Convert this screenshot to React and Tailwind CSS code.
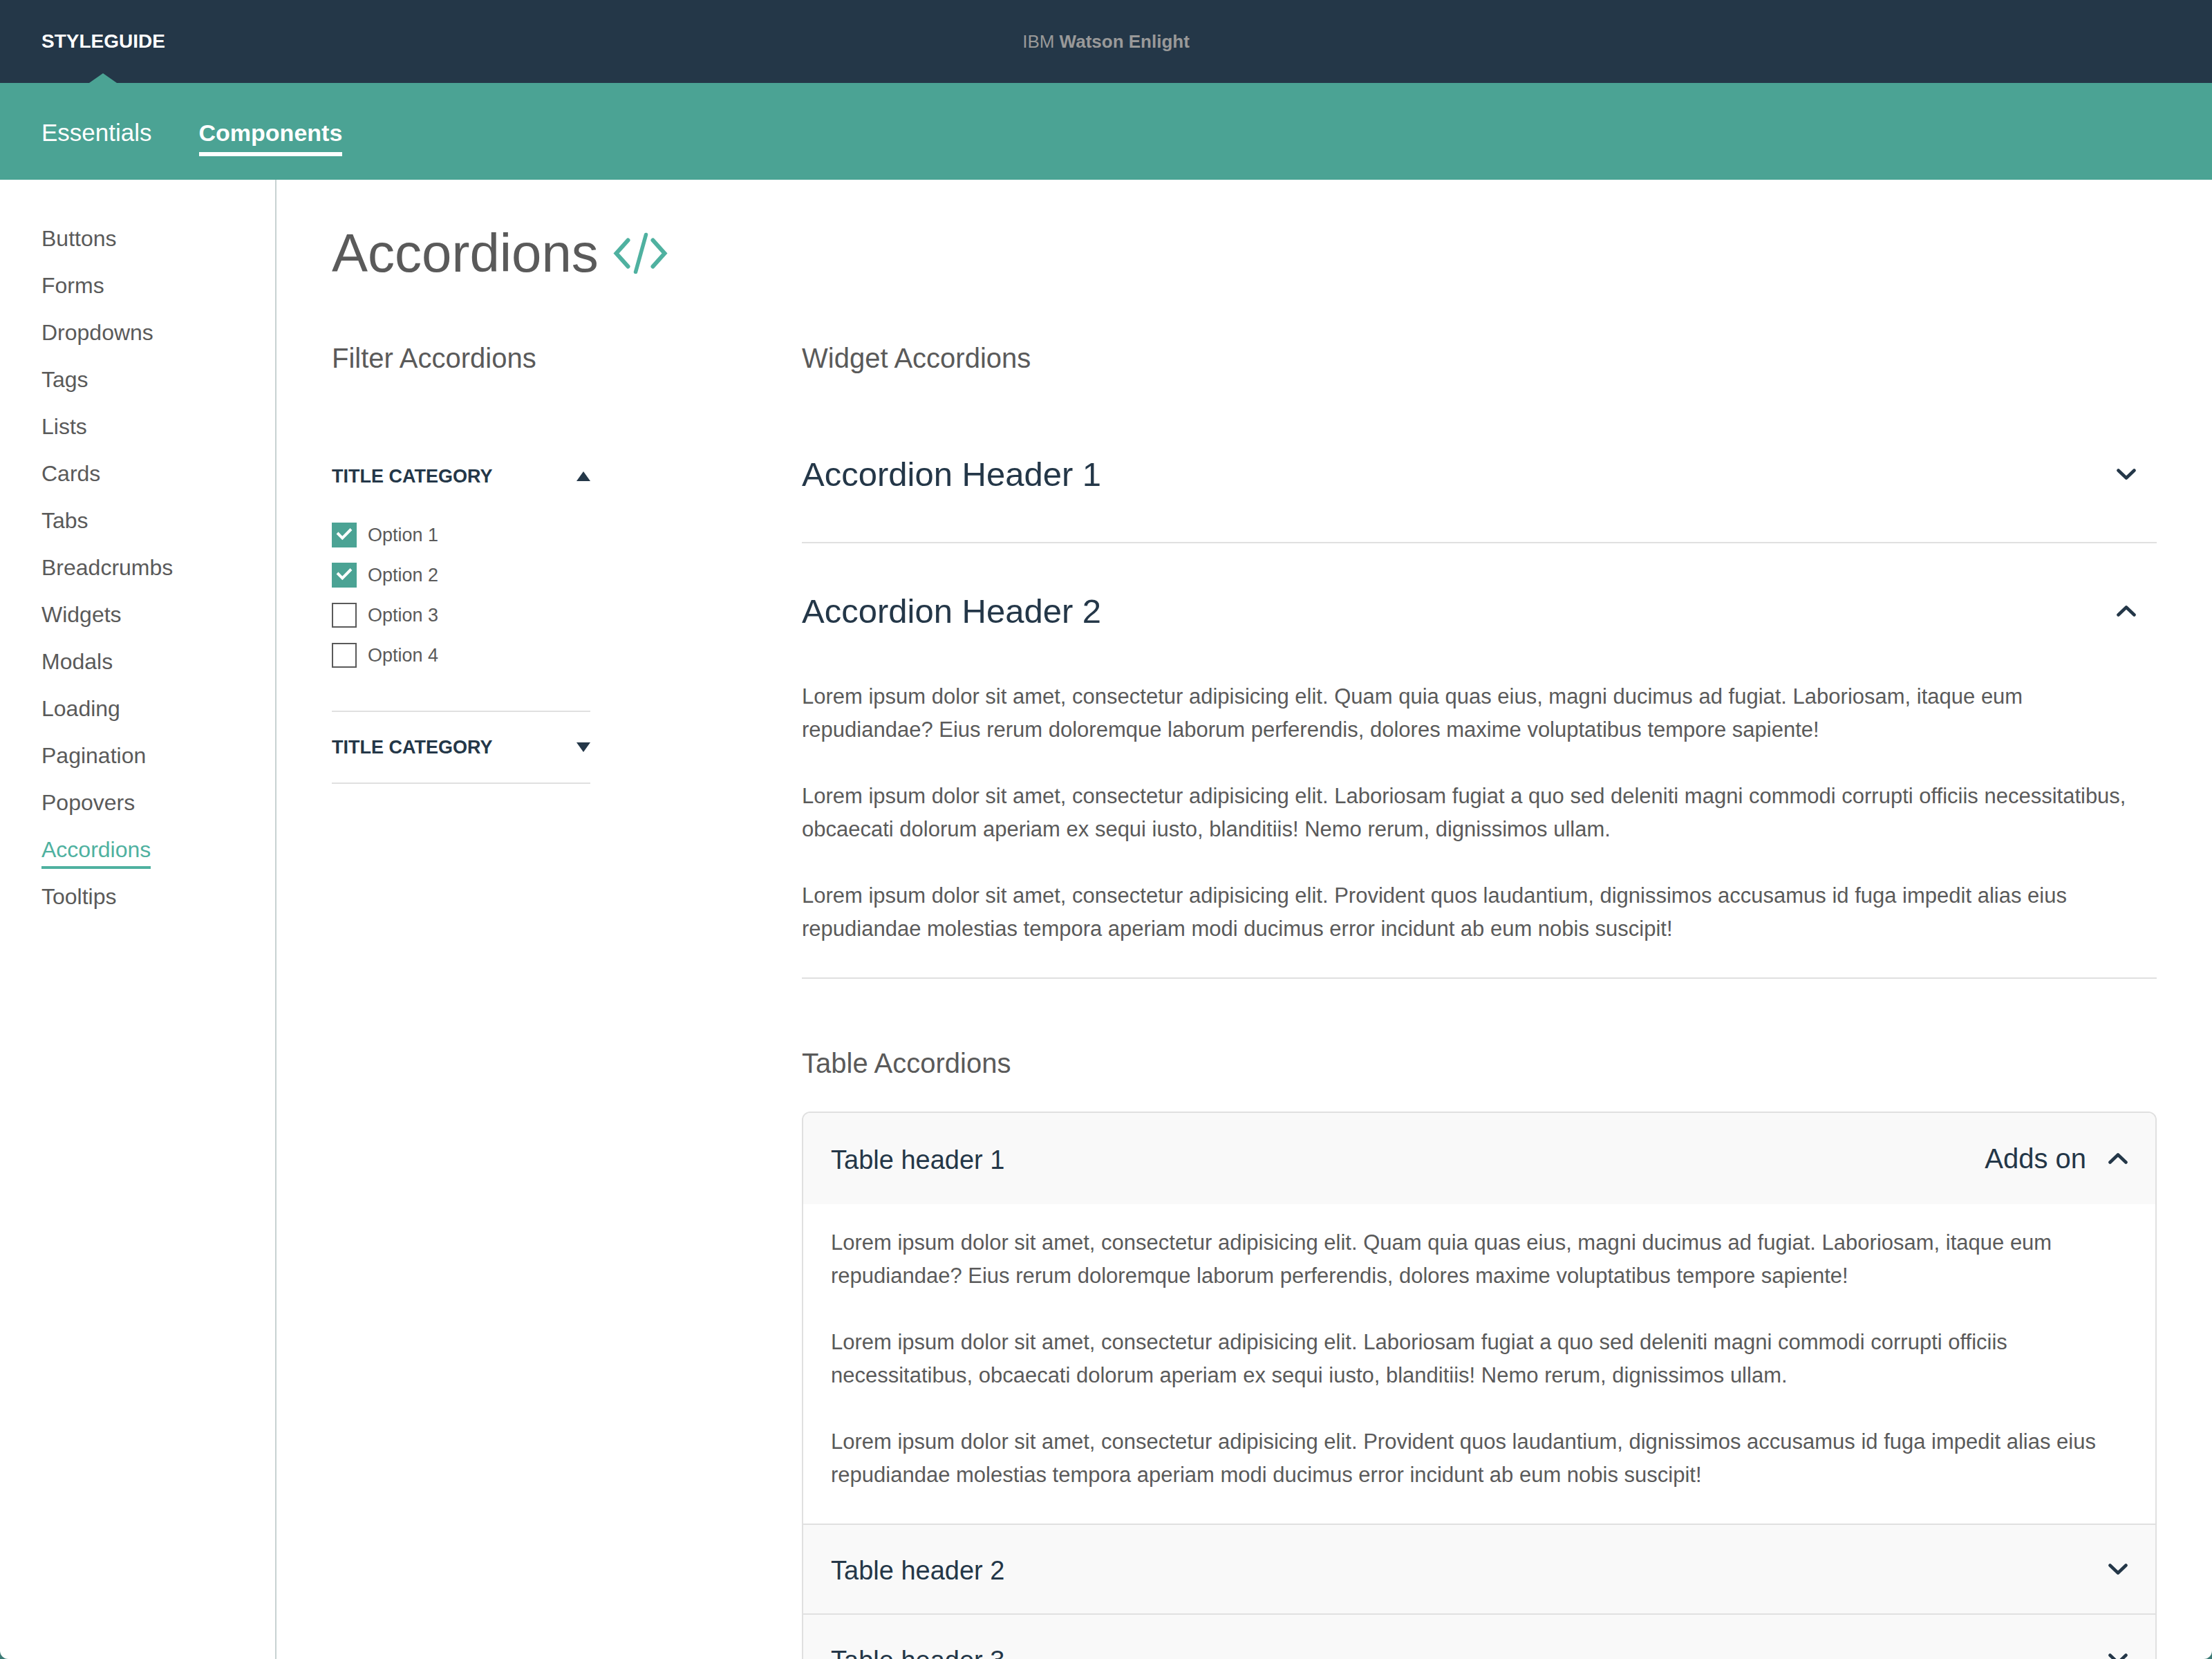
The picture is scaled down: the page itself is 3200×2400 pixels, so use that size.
import { useState } from "react";

const NAV_ITEMS = [
  "Buttons", "Forms", "Dropdowns", "Tags", "Lists", "Cards", "Tabs", "Breadcrumbs",
  "Widgets", "Modals", "Loading", "Pagination", "Popovers", "Accordions", "Tooltips",
];

const PARAGRAPHS = [
  "Lorem ipsum dolor sit amet, consectetur adipisicing elit. Quam quia quas eius, magni ducimus ad fugiat. Laboriosam, itaque eum repudiandae? Eius rerum doloremque laborum perferendis, dolores maxime voluptatibus tempore sapiente!",
  "Lorem ipsum dolor sit amet, consectetur adipisicing elit. Laboriosam fugiat a quo sed deleniti magni commodi corrupti officiis necessitatibus, obcaecati dolorum aperiam ex sequi iusto, blanditiis! Nemo rerum, dignissimos ullam.",
  "Lorem ipsum dolor sit amet, consectetur adipisicing elit. Provident quos laudantium, dignissimos accusamus id fuga impedit alias eius repudiandae molestias tempora aperiam modi ducimus error incidunt ab eum nobis suscipit!",
];

function Chevron({ open }) {
  return (
    <svg className="h-4 w-7 shrink-0" viewBox="0 0 28 16" fill="none" stroke="#243748" strokeWidth="4.6" strokeLinecap="round" strokeLinejoin="round" aria-hidden="true">
      <path d={open ? "M2.5 13.5 14 2.5l11.500 11" : "M2.500 2.500 14 13.500l11.500-11"} />
    </svg>
  );
}

function Triangle({ open }) {
  return (
    <svg className="h-3.5 w-5 shrink-0" viewBox="0 0 20 14" fill="#243748" aria-hidden="true">
      <path d={open ? "M10 0 20 14H0z" : "M0 0h20L10 14z"} />
    </svg>
  );
}

function CodeIcon() {
  return (
    <svg className="h-[60px] w-20 shrink-0" viewBox="0 0 80 60" fill="none" stroke="#4fb1a0" aria-hidden="true">
      <path strokeWidth="6" strokeLinecap="round" d="M22.500 11.500 5.500 30.500l17 19M58.500 11.500l17 19-17 19" />
      <path strokeWidth="5.500" strokeLinecap="round" d="M48.500 3.500 33.500 57.500" />
    </svg>
  );
}

function Prose() {
  return (
    <div className="flex flex-col gap-12 text-[31px] leading-[48px] text-[#5a5a5a]">
      {PARAGRAPHS.map((text) => (
        <p key={text}>{text}</p>
      ))}
    </div>
  );
}

function SectionTitle({ children }) {
  return <h2 className="text-[40px] leading-[48px]">{children}</h2>;
}

function Checkbox({ label, defaultChecked }) {
  return (
    <label className="flex items-center gap-4">
      <span className="relative flex size-9 shrink-0">
        <input
          type="checkbox"
          defaultChecked={defaultChecked}
          className="peer size-9 appearance-none border-2 border-[#5a5a5a] checked:border-[#4ba394] checked:bg-[#4ba394]"
        />
        <svg className="pointer-events-none absolute inset-0 hidden size-9 peer-checked:block" viewBox="0 0 36 36" fill="none" stroke="#ffffff" strokeWidth="4" aria-hidden="true">
          <path d="m8 15 7.300 7.300L28 9.500" />
        </svg>
      </span>
      <span className="text-[27px] leading-8">{label}</span>
    </label>
  );
}

function FilterAccordion({ title, defaultOpen, children }) {
  const [open, setOpen] = useState(Boolean(defaultOpen));
  return (
    <section className="border-b-2 border-[#e0e0e0]">
      <button type="button" aria-expanded={open} onClick={() => setOpen(!open)} className="flex h-[102px] w-full items-center justify-between text-[#243748]">
        <span className="text-[27px] leading-8 font-bold uppercase">{title}</span>
        <Triangle open={open} />
      </button>
      {open && <div className="flex flex-col gap-[22px] pt-4 pb-[62px]">{children}</div>}
    </section>
  );
}

function WidgetAccordion({ title, defaultOpen }) {
  const [open, setOpen] = useState(Boolean(defaultOpen));
  return (
    <section className="border-b-2 border-[#e0e0e0]">
      <button type="button" aria-expanded={open} onClick={() => setOpen(!open)} className="flex h-[196px] w-full items-center justify-between pr-[30px] text-[#243748]">
        <span className="text-[49px] leading-[64px]">{title}</span>
        <Chevron open={open} />
      </button>
      {open && <div className="pt-0.5 pb-[46px]"><Prose /></div>}
    </section>
  );
}

function TableAccordion({ title, extra, defaultOpen }) {
  const [open, setOpen] = useState(Boolean(defaultOpen));
  return (
    <section>
      <button type="button" aria-expanded={open} onClick={() => setOpen(!open)} className="flex w-full items-center gap-8 bg-[#f9f9f9] px-10 py-[38px] text-[#243748]">
        <span className="flex-1 pt-1 text-left text-[38px] leading-[48px]">{title}</span>
        {extra && <span className="text-[40px] leading-[56px]">{extra}</span>}
        <Chevron open={open} />
      </button>
      {open && <div className="px-10 pt-8 pb-[46px]"><Prose /></div>}
    </section>
  );
}

export default function App() {
  return (
    <div className="h-screen overflow-hidden bg-[#3c7b76] font-['Liberation_Sans',Arial,sans-serif] text-[#5a5a5a]">
      <div className="flex h-full flex-col overflow-hidden rounded-b-xl bg-white">
        <header className="grid h-[120px] shrink-0 grid-cols-[1fr_auto_1fr] items-center bg-[#243748] px-15">
          <div className="flex h-full">
            <a href="#styleguide" className="relative flex items-center text-[28px] leading-8 font-bold text-white">
              STYLEGUIDE
              <svg className="absolute bottom-0 left-1/2 h-3.5 w-10 -translate-x-1/2" viewBox="0 0 40 14" fill="#4ba394" aria-hidden="true">
                <path d="M20 0 40 14H0z" />
              </svg>
            </a>
          </div>
          <p className="text-[26px] leading-8 text-[#999999]">IBM <b>Watson Enlight</b></p>
        </header>

        <nav aria-label="Sections" className="flex h-[140px] shrink-0 items-start gap-[68px] bg-[#4ba394] px-15 pt-12 text-white">
          <a href="#essentials" className="text-[35px] leading-[48px]">Essentials</a>
          <a href="#components" className="border-b-[6px] border-white pb-1 text-[34px] leading-[48px] font-bold">Components</a>
        </nav>

        <div className="flex min-h-0 flex-1">
          <nav aria-label="Components" className="w-[400px] shrink-0 border-r-2 border-[#c8d2d2] px-15 pt-[61px]">
            <ul className="flex flex-col gap-5">
              {NAV_ITEMS.map((item) => (
                <li key={item} className="h-12 text-[32px] leading-[48px]">
                  <a
                    href={`#${item.toLowerCase()}`}
                    className={item === "Accordions" ? "inline-block border-b-4 border-[#4fb1a0] text-[#4fb1a0]" : "inline-block"}
                  >
                    {item}
                  </a>
                </li>
              ))}
            </ul>
          </nav>

          <main className="min-w-0 flex-1 px-20 pt-[58px]">
            <div className="flex items-center gap-5">
              <h1 className="text-[78px] leading-[96px]">Accordions</h1>
              <CodeIcon />
            </div>

            <div className="mt-20 flex gap-[306px]">
              <div className="w-[374px] shrink-0">
                <SectionTitle>Filter Accordions</SectionTitle>
                <div className="mt-24">
                  <FilterAccordion title="Title category" defaultOpen>
                    <Checkbox label="Option 1" defaultChecked />
                    <Checkbox label="Option 2" defaultChecked />
                    <Checkbox label="Option 3" />
                    <Checkbox label="Option 4" />
                  </FilterAccordion>
                  <FilterAccordion title="Title category" />
                </div>
              </div>

              <div className="min-w-0 flex-1">
                <SectionTitle>Widget Accordions</SectionTitle>
                <div className="mt-[46px]">
                  <WidgetAccordion title="Accordion Header 1" />
                  <WidgetAccordion title="Accordion Header 2" defaultOpen />
                </div>

                <div className="mt-[98px]">
                  <SectionTitle>Table Accordions</SectionTitle>
                </div>
                <div className="mt-[46px] divide-y-2 divide-[#e0e0e0] overflow-hidden rounded-xl border-2 border-[#e0e0e0]">
                  <TableAccordion title="Table header 1" extra="Adds on" defaultOpen />
                  <TableAccordion title="Table header 2" />
                  <TableAccordion title="Table header 3" />
                </div>
              </div>
            </div>
          </main>
        </div>
      </div>
    </div>
  );
}
